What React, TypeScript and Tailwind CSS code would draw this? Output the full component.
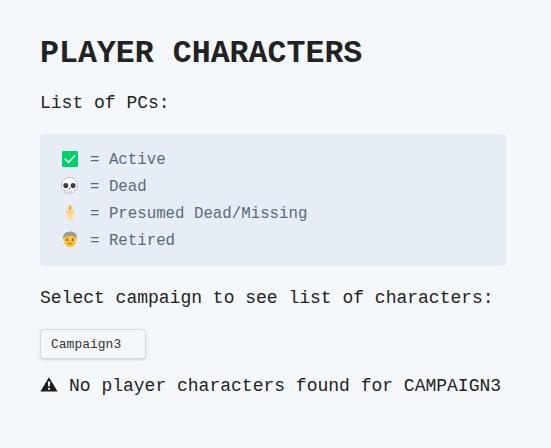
import type { ReactNode } from "react";

function CheckIcon() {
  return (
    <svg width="16" height="16" viewBox="0 0 16 16" className="ml-px">
      <rect width="16" height="16" rx="1.3" fill="#00d26a" />
      <path d="M3.2 8.2l3.4 3.2 6.3-6.9" fill="none" stroke="#f4f4f4" strokeWidth="1.6" strokeLinecap="round" strokeLinejoin="round" />
    </svg>
  );
}

function SkullIcon() {
  return (
    <svg width="17" height="17" viewBox="0 0 17 17">
      <path
        d="M8.5.5C4 .5.8 3.5.8 7.6c0 1.3-.3 2-.3 2.9 0 1.6 1.2 2.3 3 2.5l.6 2.4c.3 1.1 1.2 1.1 1.7.6.5.7 1.3.7 1.8 0 .5.6 1.3.6 1.8 0 .5.7 1.3.7 1.8 0 .5.5 1.4.5 1.7-.6l.6-2.4c1.8-.2 3-.9 3-2.5 0-.9-.3-1.6-.3-2.9C16.2 3.5 13 .5 8.5.5z"
        fill="#fff"
        stroke="#b4acbc"
        strokeWidth=".8"
      />
      <ellipse cx="4.8" cy="8.6" rx="2.5" ry="2.6" fill="#433b4b" />
      <ellipse cx="12.1" cy="8.6" rx="2.5" ry="2.6" fill="#433b4b" />
      <path d="M8.5 10.4l-1 1.5h2z" fill="#433b4b" />
      <path d="M6.3 13.5v2.3M8.5 13.5v2.3M10.7 13.5v2.3" stroke="#9b93a2" strokeWidth=".6" />
    </svg>
  );
}

function CandleIcon() {
  return (
    <svg width="16" height="17" viewBox="0 0 16 17" className="ml-px">
      <path d="M8.2.7C7.4 2 6.4 2.6 6.4 4a1.7 1.7 0 003.4 0C9.8 2.6 8.8 2 8.2.7z" fill="#ffb02e" />
      <path d="M8.1 4.2v2.1" stroke="#8b6a58" strokeWidth=".7" />
      <path d="M4.1 5.8h8v3.4l-.7 1.1v5.3q0 .6-.6.6H5.5q-.6 0-.6-.6v-5.3l-.8-.8z" fill="#ffdea7" />
      <path d="M4.1 6q4 1.2 8 0v3.5q-.9 1.1-1.7 0-.8-.8-1.4.6-.8.8-1.6-.3-.8-.8-1.5.4-.8.9-1.8-.5z" fill="#ffcf85" />
    </svg>
  );
}

function OlderPersonIcon() {
  return (
    <svg width="16" height="17" viewBox="0 0 16 17" className="ml-px">
      <path d="M1.5 7.2C.5 6.5.6 4.8 1.9 4 2.1 2 4 1 5.9 1.1c2.2-1 5.4-.7 7.1 1.1 1.5.5 2.3 3.6 1.3 5z" fill="#9b9b9b" />
      <path d="M2.1 7.1Q1 7 1 8.7q0 1.5 1.2 1.5C2.5 14 4.8 16 8 16s5.5-2 5.8-5.8q1.2 0 1.2-1.5 0-1.7-1.1-1.6C12.8 4.7 10.5 5.2 8 4.8 5.5 6 3.3 4.8 2.1 7.1z" fill="#ffc536" />
      <path d="M3.7 7.4q1.3-1 2.4 0M9.9 7.4q1.1-1 2.4 0M3.2 11.6l1.2 1M12.8 11.6l-1.2 1" fill="none" stroke="#e49318" strokeWidth=".8" />
      <ellipse cx="5.2" cy="9.1" rx=".9" ry="1" fill="#4d4540" />
      <ellipse cx="10.8" cy="9.1" rx=".9" ry="1" fill="#4d4540" />
      <path d="M7.1 10.8q.9.8 1.8 0" fill="none" stroke="#e88b20" strokeWidth=".7" />
      <path d="M6.1 12.7q1.9 1.1 3.8 0" fill="none" stroke="#b25a35" strokeWidth=".9" strokeLinecap="round" />
    </svg>
  );
}

function WarningIcon() {
  return (
    <svg width="18" height="15" viewBox="0 0 18 15" className="mt-1">
      <path d="M9 .2L17.6 14.5H.4z" fill="#1c1c1c" />
      <path d="M7.8 4.6h2.4l-.5 5H8.3z" fill="#f4f8fb" />
      <circle cx="9" cy="11.8" r="1.1" fill="#f4f8fb" />
    </svg>
  );
}

const statuses: { label: string; icon: ReactNode }[] = [
  { label: "Active", icon: <CheckIcon /> },
  { label: "Dead", icon: <SkullIcon /> },
  { label: "Presumed Dead/Missing", icon: <CandleIcon /> },
  { label: "Retired", icon: <OlderPersonIcon /> },
];

export default function App() {
  return (
    <div className="min-h-screen bg-[#f4f8fb] pl-10 pr-[45px] pt-9 font-['Liberation_Mono',monospace] text-lg leading-[27px] text-[#222] whitespace-nowrap">
      <h1 className="text-[31.6px] leading-9 font-bold">PLAYER CHARACTERS</h1>
      <p className="mt-[18px]">List of PCs:</p>

      {/* Status legend */}
      <ul className="mt-[17px] h-[132px] rounded bg-[#e6edf5] pl-[21px] pt-3 text-[15.75px] text-[#5a6b7d]">
        {statuses.map(({ label, icon }) => (
          <li key={label} className="flex h-[27px] items-center">
            <span className="flex w-[29px] items-center pb-0.5">{icon}</span>
            <span className="whitespace-pre pt-0.5">= {label}</span>
          </li>
        ))}
      </ul>

      <p className="mt-[19px]">Select campaign to see list of characters:</p>
      <button
        type="button"
        className="mt-[17px] flex h-[30px] w-[106px] items-center rounded border border-[#d3d8de] bg-[#f5f8fb] pl-[10px] text-[13px] text-[#333] shadow-[0_1px_3px_rgba(0,0,0,0.13)]"
      >
        Campaign3
      </button>
      <p className="mt-3.5 flex">
        <span className="w-[29px]">
          <WarningIcon />
        </span>
        No player characters found for CAMPAIGN3
      </p>
    </div>
  );
}
